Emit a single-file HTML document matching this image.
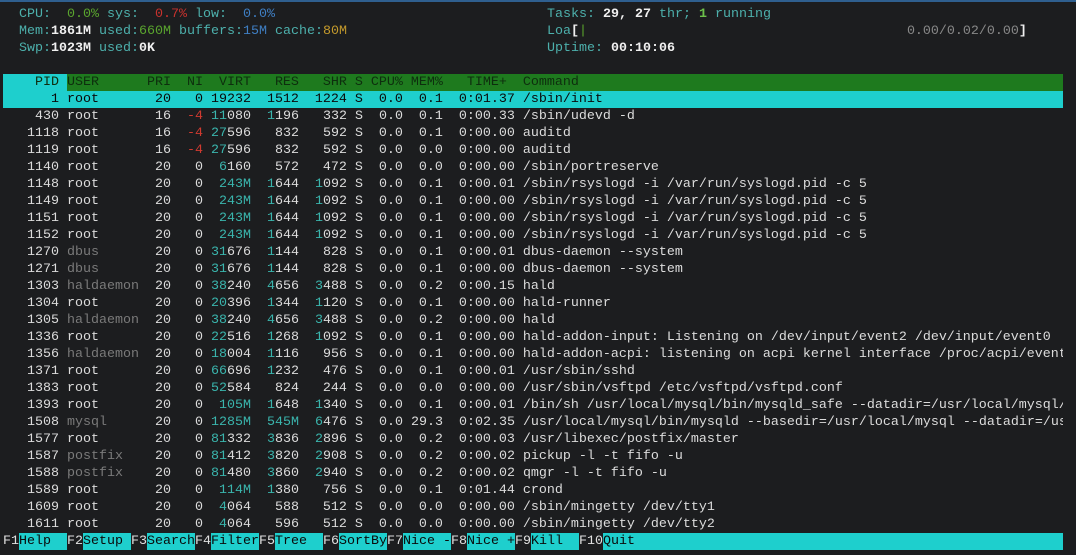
<!DOCTYPE html>
<html><head><meta charset="utf-8"><style>
html,body{margin:0;padding:0;background:#1c1d1f;width:1076px;height:555px;overflow:hidden}
body{position:relative;font-family:"Liberation Mono",monospace;font-size:13.33px;line-height:17px;color:#dcdcdc}
pre{margin:0;font:inherit;white-space:pre}
.top{position:absolute;left:0;top:0;width:1076px;height:2px;background:#2f5f8f}
.l{position:absolute;left:3px;top:6px}
.r{position:absolute;left:547px;top:6px}
.t{color:#4db0ac}
.w{color:#f0f0f0;font-weight:bold}
.gr{color:#5aa52e}.rd{color:#c8322e}.bl{color:#3f7fc4}.ye{color:#c49a2c}.gn{color:#6cc04a;font-weight:bold}
#tbl{position:absolute;left:3px;top:74px;width:1060px;overflow:hidden}
.hdr{position:relative;height:17px;background:#1e7a1e;color:#0e2e0e}
.hdr .p{position:absolute;left:0;top:0;width:64px;height:17px;background:#1ecfcd}
.hdr pre{position:absolute;left:0;top:0}
.sel{background:#1ecfcd;color:#0a0a0a}
c{color:#3ab5ad}
g{color:#7a7a7a}
r{color:#d03a30}
#fk{position:absolute;left:3px;top:533px;width:1060px;height:17px;overflow:hidden}
#fk span{display:inline-block}
.k{color:#e0e0e0}
.f{background:#1ecfcd;color:#0a0a0a}
</style></head><body>
<div class="top"></div>
<pre class="l">  <span class="t">CPU:</span>  <span class="gr">0.0%</span> <span class="t">sys:</span>  <span class="rd">0.7%</span> <span class="t">low:</span>  <span class="bl">0.0%</span>
  <span class="t">Mem:</span><span class="w">1861M</span> <span class="t">used:</span><span class="gr">660M</span> <span class="t">buffers:</span><span class="bl">15M</span> <span class="t">cache:</span><span class="ye">80M</span>
  <span class="t">Swp:</span><span class="w">1023M</span> <span class="t">used:</span><span class="w">0K</span></pre>
<pre class="r"><span class="t">Tasks:</span> <span class="w">29, 27</span> <span class="t">thr;</span> <span class="gn">1</span> <span class="t">running</span>
<span class="t">Loa</span><span class="w">[</span><span class="gr">|</span>                                        <span style="color:#888">0.00/0.02/0.00</span><span class="w">]</span>
<span class="t">Uptime:</span> <span class="w">00:10:06</span></pre>
<div id="tbl">
<div class="hdr"><div class="p"></div><pre>    PID USER      PRI  NI  VIRT   RES   SHR S CPU% MEM%   TIME+  Command</pre></div>
<pre class="sel">      1 root       20   0 19232  1512  1224 S  0.0  0.1  0:01.37 /sbin/init                                                                     </pre>
<pre>    430 root       16  <r>-4</r> <c>11</c>080  <c>1</c>196   332 S  0.0  0.1  0:00.33 /sbin/udevd -d
   1118 root       16  <r>-4</r> <c>27</c>596   832   592 S  0.0  0.1  0:00.00 auditd
   1119 root       16  <r>-4</r> <c>27</c>596   832   592 S  0.0  0.0  0:00.00 auditd
   1140 root       20   0  <c>6</c>160   572   472 S  0.0  0.0  0:00.00 /sbin/portreserve
   1148 root       20   0  <c>243M</c>  <c>1</c>644  <c>1</c>092 S  0.0  0.1  0:00.01 /sbin/rsyslogd -i /var/run/syslogd.pid -c 5
   1149 root       20   0  <c>243M</c>  <c>1</c>644  <c>1</c>092 S  0.0  0.1  0:00.00 /sbin/rsyslogd -i /var/run/syslogd.pid -c 5
   1151 root       20   0  <c>243M</c>  <c>1</c>644  <c>1</c>092 S  0.0  0.1  0:00.00 /sbin/rsyslogd -i /var/run/syslogd.pid -c 5
   1152 root       20   0  <c>243M</c>  <c>1</c>644  <c>1</c>092 S  0.0  0.1  0:00.00 /sbin/rsyslogd -i /var/run/syslogd.pid -c 5
   1270 <g>dbus</g>       20   0 <c>31</c>676  <c>1</c>144   828 S  0.0  0.1  0:00.01 dbus-daemon --system
   1271 <g>dbus</g>       20   0 <c>31</c>676  <c>1</c>144   828 S  0.0  0.1  0:00.00 dbus-daemon --system
   1303 <g>haldaemon</g>  20   0 <c>38</c>240  <c>4</c>656  <c>3</c>488 S  0.0  0.2  0:00.15 hald
   1304 root       20   0 <c>20</c>396  <c>1</c>344  <c>1</c>120 S  0.0  0.1  0:00.00 hald-runner
   1305 <g>haldaemon</g>  20   0 <c>38</c>240  <c>4</c>656  <c>3</c>488 S  0.0  0.2  0:00.00 hald
   1336 root       20   0 <c>22</c>516  <c>1</c>268  <c>1</c>092 S  0.0  0.1  0:00.00 hald-addon-input: Listening on /dev/input/event2 /dev/input/event0
   1356 <g>haldaemon</g>  20   0 <c>18</c>004  <c>1</c>116   956 S  0.0  0.1  0:00.00 hald-addon-acpi: listening on acpi kernel interface /proc/acpi/event
   1371 root       20   0 <c>66</c>696  <c>1</c>232   476 S  0.0  0.1  0:00.01 /usr/sbin/sshd
   1383 root       20   0 <c>52</c>584   824   244 S  0.0  0.0  0:00.00 /usr/sbin/vsftpd /etc/vsftpd/vsftpd.conf
   1393 root       20   0  <c>105M</c>  <c>1</c>648  <c>1</c>340 S  0.0  0.1  0:00.01 /bin/sh /usr/local/mysql/bin/mysqld_safe --datadir=/usr/local/mysql/
   1508 <g>mysql</g>      20   0 <c>1285M</c>  <c>545M</c>  <c>6</c>476 S  0.0 29.3  0:02.35 /usr/local/mysql/bin/mysqld --basedir=/usr/local/mysql --datadir=/us
   1577 root       20   0 <c>81</c>332  <c>3</c>836  <c>2</c>896 S  0.0  0.2  0:00.03 /usr/libexec/postfix/master
   1587 <g>postfix</g>    20   0 <c>81</c>412  <c>3</c>820  <c>2</c>908 S  0.0  0.2  0:00.02 pickup -l -t fifo -u
   1588 <g>postfix</g>    20   0 <c>81</c>480  <c>3</c>860  <c>2</c>940 S  0.0  0.2  0:00.02 qmgr -l -t fifo -u
   1589 root       20   0  <c>114M</c>  <c>1</c>380   756 S  0.0  0.1  0:01.44 crond
   1609 root       20   0  <c>4</c>064   588   512 S  0.0  0.0  0:00.00 /sbin/mingetty /dev/tty1
   1611 root       20   0  <c>4</c>064   596   512 S  0.0  0.0  0:00.00 /sbin/mingetty /dev/tty2</pre>
</div>
<pre id="fk"><span class="k">F1</span><span class="f">Help  </span><span class="k">F2</span><span class="f">Setup </span><span class="k">F3</span><span class="f">Search</span><span class="k">F4</span><span class="f">Filter</span><span class="k">F5</span><span class="f">Tree  </span><span class="k">F6</span><span class="f">SortBy</span><span class="k">F7</span><span class="f">Nice -</span><span class="k">F8</span><span class="f">Nice +</span><span class="k">F9</span><span class="f">Kill  </span><span class="k">F10</span><span class="f">Quit                                                        </span></pre>
</body></html>
